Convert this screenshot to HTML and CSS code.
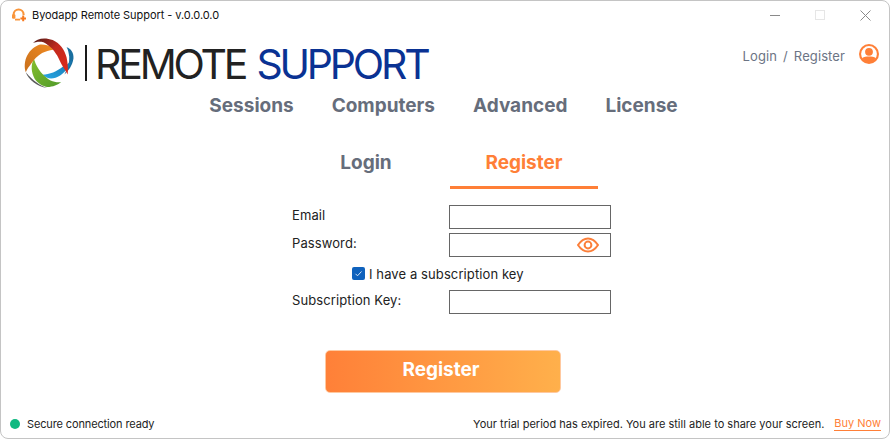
FILE: index.html
```html
<!DOCTYPE html>
<html lang="en">
<head>
<meta charset="utf-8">
<title>Byodapp Remote Support</title>
<link rel="stylesheet" href="styles.css">
</head>
<body>
<div class="window">
  <div class="titlebar">
    <svg class="app-icon" viewBox="0 0 16 14" width="16" height="14">
      <path d="M2.600 9V6.500a5 5 0 0 1 10 0V7" fill="none" stroke="#f9953a" stroke-width="2.100"/>
      <rect x="1" y="6.200" width="3.400" height="4.600" rx="1.200" fill="#f9953a"/>
      <path d="M4 11.600h5" stroke="#f9953a" stroke-width="1.800" fill="none"/>
      <path d="M12.200 7.600v5.600M9.400 10.400h5.600" stroke="#f7791f" stroke-width="2" fill="none"/>
    </svg>
    <span class="app-title">Byodapp Remote Support - v.0.0.0.0</span>
    <div class="controls">
      <span class="ctl-min"></span>
      <span class="ctl-max"></span>
      <svg class="ctl-close" viewBox="0 0 11 11" width="11" height="11"><path d="M.5.5l10 10M10.500.5l-10 10" stroke="#8a8a8a" stroke-width="1" fill="none"/></svg>
    </div>
  </div>
  <header class="header">
    <div class="logo">
      <svg class="logo-mark" viewBox="1 -0.500 47 50" width="50" height="50" preserveAspectRatio="none">
        <defs>
          <linearGradient id="g-red" x1="0" y1="0" x2="1" y2="1"><stop offset="0" stop-color="#4a1a18"/><stop offset=".45" stop-color="#c22a1e"/><stop offset="1" stop-color="#e0281a"/></linearGradient>
          <linearGradient id="g-orange" x1="1" y1="0" x2="0" y2="1"><stop offset="0" stop-color="#f08a22"/><stop offset="1" stop-color="#c8701c"/></linearGradient>
          <linearGradient id="g-green" x1="0" y1="0" x2="1" y2="1"><stop offset="0" stop-color="#85bd2c"/><stop offset="1" stop-color="#4f9a2a"/></linearGradient>
          <linearGradient id="g-blue" x1="0" y1="1" x2="1" y2="0"><stop offset="0" stop-color="#29a8e6"/><stop offset="1" stop-color="#1470a8"/></linearGradient>
        </defs>
        <path d="M41 8.700C45 10 48 14 47.500 20C46.500 27 43 32 39 36C42 30 44 24 43.500 18C43 14 42.500 11 41 8.700Z" fill="#1a6f9f"/>
        <path d="M2.700 33.700C5 41 13 48 23 49.500C16 47 9 42 2.700 33.700Z" fill="#5a5a5a"/>
        <path d="M18.300 36.300C23 41 29 41 35 37C40 33 45 27 47 20C43 25 41 27 37.700 28C32 33 25 36 18.300 36.300Z" fill="url(#g-blue)"/>
        <path d="M10.300 20.300C7 27 8 34 11 40.300C14 45 19 48 23 48.500C28 48.500 33 46 36 43.700C32 44 29 43.500 26 42C22 40 15 33 12 25.300Z" fill="url(#g-green)"/>
        <path d="M28.300 8.700C24 7 20 5.500 16 6C11 8 7 11 4 17C1.500 22 1 29 2.700 33.700C4 30 6 28 7.700 25.300C10 21 14 17 18 14.500C21 13 25 12 28.300 11.300Z" fill="url(#g-orange)"/>
        <path d="M9.300 4.700C13-.5 21-1.200 28 1.500C35 5 39 11 41 18.700C42.300 25 42.500 31 42 36C40 32 38 29 36 25.300C34 21 33 18 31 15.300C29 12 27.500 10 26 8.700C23 6 21 4.500 19.300 3.700C15.500 2.800 12 3.300 9.300 4.700Z" fill="url(#g-red)"/>
      </svg>
      <span class="logo-bar"></span>
      <span class="logo-text"><span class="logo-dark">REMOTE</span> <span class="logo-blue">SUPPORT</span></span>
    </div>
    <div class="account">
      <a class="account-link">Login</a><span class="account-sep">/</span><a class="account-link">Register</a>
      <svg class="account-icon" viewBox="0 0 20 20" width="20" height="20">
        <circle cx="10" cy="10" r="10" fill="#ff7f37"/>
        <circle cx="10" cy="10" r="7.900" fill="#fff"/>
        <circle cx="10" cy="7.800" r="3.900" fill="#ff7f37"/>
        <path d="M3 14.200C5 12.600 7.500 12.400 10 12.400S15 12.600 17 14.200C15.500 17 13 18.500 10 18.500S4.500 17 3 14.200Z" fill="#ff7f37"/>
      </svg>
    </div>
  </header>
  <nav class="nav">
    <a class="nav-item">Sessions</a>
    <a class="nav-item">Computers</a>
    <a class="nav-item">Advanced</a>
    <a class="nav-item">License</a>
  </nav>
  <div class="tabs">
    <a class="tab">Login</a>
    <a class="tab tab-active">Register</a>
  </div>
  <form class="form">
    <label class="label">Email</label>
    <div class="input"></div>
    <label class="label">Password:</label>
    <div class="input input-eye">
      <svg viewBox="0 0 22 16" width="22" height="16"><path d="M1 8C4 3.500 7 1.500 11 1.500S18 3.500 21 8C18 12.500 15 14.500 11 14.500S4 12.500 1 8Z" fill="none" stroke="#fb7f3a" stroke-width="2"/><circle cx="11" cy="8" r="3.400" fill="none" stroke="#fb7f3a" stroke-width="2"/></svg>
    </div>
    <div class="check-row">
      <span class="check"><svg viewBox="0 0 13 13" width="13" height="13"><path d="M3.500 6.800l2 2 4-4.300" fill="none" stroke="#d5e4f5" stroke-width="1"/></svg></span>
      <span class="check-label">I have a subscription key</span>
    </div>
    <label class="label">Subscription Key:</label>
    <div class="input"></div>
  </form>
  <div class="actions"><button class="submit" type="button">Register</button></div>
  <footer class="footer">
    <div class="status"><span class="dot"></span><span class="status-text">Secure connection ready</span></div>
    <div class="trial"><span class="trial-text">Your trial period has expired. You are still able to share your screen.</span><a class="buy">Buy Now</a></div>
  </footer>
</div>
</body>
</html>
```
FILE: styles.css
```css
* { box-sizing: border-box; }
html, body { margin: 0; padding: 0; background: #fff; }
body { width: 890px; height: 439px; overflow: hidden; font-family: Inter, "Liberation Sans", sans-serif; }
.window {
  width: 890px; height: 439px; display: flex; flex-direction: column;
  border: 1px solid #c4c4c4; border-radius: 8px; background: #fff;
}
.titlebar { display: flex; align-items: center; height: 28px; padding-left: 10px; flex: none; }
.app-icon { flex: none; }
.app-title { margin-left: 5px; font-size: 11px; letter-spacing: -.05px; color: #111; }
.controls { margin-left: auto; display: flex; align-items: center; }
.ctl-min { width: 10px; height: 1px; background: #8a8a8a; margin-right: 35px; }
.ctl-max { width: 10px; height: 10px; border: 1px solid #e6e6e6; margin-right: 35px; }
.ctl-close { margin-right: 18px; }
.header { display: flex; align-items: center; justify-content: space-between; height: 60px; padding: 8px 10px 0 23px; flex: none; }
.logo { display: flex; align-items: center; }
.logo-mark { flex: none; }
.logo-bar { width: 2px; height: 36px; background: #1a1a1a; margin-left: 11px; }
.logo-text { margin: 2px 0 0 8px; font-size: 41px; font-weight: 400; letter-spacing: -3.2px; white-space: nowrap; word-spacing: 3px; line-height: 1; }
.logo-dark { color: #222; }
.logo-blue { color: #0a3293; }
.account { display: flex; align-items: flex-end; margin-bottom: 18px; font-size: 13px; letter-spacing: .1px; line-height: 15px; color: #6c7484; }
.account-sep { margin: 0 6px; }
.account-icon { margin-left: 14px; }
.nav { display: flex; justify-content: center; gap: 38px; height: 36px; padding-right: 3px; flex: none; }
.nav-item { font-size: 19px; font-weight: 700; color: #666d7b; line-height: 34px; }
.tabs { display: flex; gap: 10px; margin: 17px 0 0 291px; flex: none; }
.tab { width: 148px; height: 47px; text-align: center; font-size: 19px; font-weight: 700; line-height: 42px; color: #666d7b; }
.tab-active { color: #ff7f37; border-bottom: 3px solid #ff7f37; }
.form { display: grid; grid-template-columns: 157px 162px; grid-template-rows: 24px 24px 25px 24px; row-gap: 4px; margin: 16px 0 0 291px; align-items: center; flex: none; }
.label { font-size: 13px; letter-spacing: .1px; color: #222; align-self: start; line-height: 20px; }
.input { height: 24px; border: 1px solid #666; background: #fff; }
.input-eye { display: flex; align-items: center; justify-content: flex-end; padding-right: 11px; }
.check-row { grid-column: 1 / 3; display: flex; align-items: center; padding-left: 60px; }
.check { width: 13px; height: 13px; border-radius: 2px; background: #0f62bd; display: flex; }
.check-label { margin-left: 4px; font-size: 13px; letter-spacing: .1px; color: #222; }
.actions { display: flex; margin: 36px 0 0 324px; flex: none; }
.submit { width: 236px; height: 43px; padding: 0 4px 4px 0; border: 1px solid #ffc9a0; border-radius: 5px; background: linear-gradient(90deg, #ff8038, #ffb04b); color: #fff; font: 700 19px Inter, sans-serif; }
.footer { display: flex; justify-content: space-between; align-items: center; margin-top: auto; height: 27px; padding: 0 8px 2px 9px; flex: none; font-size: 11px; color: #222; }
.status { display: flex; align-items: center; }
.status-text { letter-spacing: -.13px; }
.dot { width: 10px; height: 10px; border-radius: 50%; background: #10b981; margin-right: 7px; }
.trial { display: flex; align-items: center; }
.trial-text { letter-spacing: .01px; }
.buy { margin-left: 10px; color: #ff7f37; border-bottom: 1px solid #ff7f37; }
```
